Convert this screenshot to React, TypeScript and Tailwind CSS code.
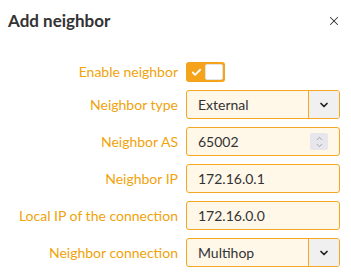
import { ChevronDown, ChevronUp, X, Check } from 'lucide-react'

function Label({ children }: { children: string }) {
  return <div className="text-right text-[14px] leading-none text-[#f0a30a] pr-2">{children}</div>
}

function TextField({ value, spinner }: { value: string; spinner?: boolean }) {
  return (
    <div className="h-[29px] rounded-[3px] border border-[#f5a623] bg-[#fff8e9] flex items-center pl-[11px] pr-[11px] text-[14px] text-[#333]">
      <span className="flex-1">{value}</span>
      {spinner && (
        <span className="w-[18px] h-[17px] rounded-[2px] bg-[#e6e6ec] flex flex-col items-center justify-center text-[#8e8e9c]">
          <ChevronUp size={9} strokeWidth={2} className="-mb-[1px]" />
          <ChevronDown size={9} strokeWidth={2} className="-mt-[1px]" />
        </span>
      )}
    </div>
  )
}

function SelectField({ value }: { value: string }) {
  return (
    <div className="h-[29px] rounded-[3px] border border-[#f5a623] bg-[#fff8e9] flex items-stretch text-[14px] text-[#333] overflow-hidden">
      <span className="flex-1 flex items-center pl-[11px]">{value}</span>
      <span className="w-[31px] border-l border-[#f5a623] bg-[#f0f0f0] flex items-center justify-center text-[#222]">
        <ChevronDown size={12} strokeWidth={3.5} />
      </span>
    </div>
  )
}

export default function App() {
  return (
    <div className="w-[351px] h-[274px] bg-white" style={{ fontFamily: 'Lato, "Noto Sans", sans-serif' }}>
      <div className="flex items-center justify-between pl-2 pr-[10px] pt-[12px]">
        <h1 className="text-[17px] font-bold text-[#333] leading-none">Add neighbor</h1>
        <X size={14} strokeWidth={1.8} className="text-[#333]" />
      </div>
      <div className="grid grid-cols-[186px_154px] items-center gap-y-[8px] mt-[33px]">
        <Label>Enable neighbor</Label>
        <div className="h-[20px] flex items-center">
          <div className="w-[39px] h-[20px] rounded-[3px] bg-[#f5a31a] flex items-center p-[2px]">
            <span className="w-[17px] flex justify-center text-white">
              <Check size={11} strokeWidth={4} />
            </span>
            <span className="w-[18px] h-[16px] rounded-[2px] bg-white border border-[#e4e4e4]" />
          </div>
        </div>
        <Label>Neighbor type</Label>
        <SelectField value="External" />
        <Label>Neighbor AS</Label>
        <TextField value="65002" spinner />
        <Label>Neighbor IP</Label>
        <TextField value="172.16.0.1" />
        <Label>Local IP of the connection</Label>
        <TextField value="172.16.0.0" />
        <Label>Neighbor connection</Label>
        <SelectField value="Multihop" />
      </div>
    </div>
  )
}
